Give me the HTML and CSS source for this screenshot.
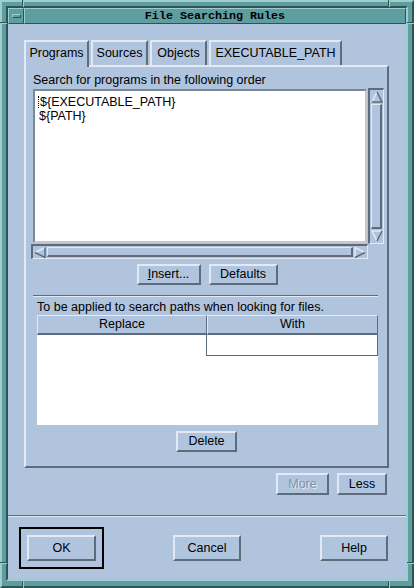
FILE: index.html
```html
<!DOCTYPE html>
<html>
<head>
<meta charset="utf-8">
<title>File Searching Rules</title>
<link rel="stylesheet" href="styles.css">
</head>
<body>
<div class="window">
  <span class="notch nv n-top-l"></span>
  <span class="notch nv n-top-r"></span>
  <span class="notch nv n-bot-l"></span>
  <span class="notch nv n-bot-r"></span>
  <span class="notch nh n-left-t"></span>
  <span class="notch nh n-left-b"></span>
  <span class="notch nh n-right-t"></span>
  <span class="notch nh n-right-b"></span>
  <div class="inner">
    <div class="titlebar">
      <div class="menu-btn"><span class="menu-glyph"></span></div>
      <div class="title">File Searching Rules</div>
    </div>
    <div class="content">
      <div class="upper">
        <div class="tabs">
          <div class="tab selected w-programs">Programs</div>
          <div class="tab w-sources">Sources</div>
          <div class="tab w-objects">Objects</div>
          <div class="tab w-exec">EXECUTABLE_PATH</div>
        </div>
        <div class="panel">
          <div class="label1">Search for programs in the following order</div>
          <div class="scrollwin">
            <div class="list">
              <div class="line"><span class="caret"></span>${EXECUTABLE_PATH}</div>
              <div class="line">${PATH}</div>
            </div>
            <div class="vscroll">
              <svg class="arrow-v" width="12" height="12" viewBox="0 0 12 12">
                <polygon points="6,1 11,11 1,11" fill="#b0c4de"/>
                <polyline points="1,11 6,1" fill="none" stroke="#e2e9f2" stroke-width="1.5"/>
                <polyline points="6,1 11,11 1,11" fill="none" stroke="#5d6b7c" stroke-width="1.5"/>
              </svg>
              <div class="vslider"></div>
              <svg class="arrow-v" width="12" height="12" viewBox="0 0 12 12">
                <polygon points="1,1 11,1 6,11" fill="#b0c4de"/>
                <polyline points="6,11 1,1 11,1" fill="none" stroke="#e2e9f2" stroke-width="1.5"/>
                <polyline points="11,1 6,11" fill="none" stroke="#5d6b7c" stroke-width="1.5"/>
              </svg>
            </div>
            <div class="hscroll">
              <svg class="arrow-h" width="12" height="11" viewBox="0 0 12 11">
                <polygon points="1,5.5 11,0.5 11,10.5" fill="#b0c4de"/>
                <polyline points="1,5.5 11,0.5" fill="none" stroke="#e2e9f2" stroke-width="1.5"/>
                <polyline points="11,0.5 11,10.5 1,5.5" fill="none" stroke="#5d6b7c" stroke-width="1.5"/>
              </svg>
              <div class="hslider"></div>
              <svg class="arrow-h" width="12" height="11" viewBox="0 0 12 11">
                <polygon points="1,0.5 11,5.5 1,10.5" fill="#b0c4de"/>
                <polyline points="1,10.5 1,0.5 11,5.5" fill="none" stroke="#e2e9f2" stroke-width="1.5"/>
                <polyline points="11,5.5 1,10.5" fill="none" stroke="#5d6b7c" stroke-width="1.5"/>
              </svg>
            </div>
            <div class="corner"></div>
          </div>
          <div class="btnrow">
            <div class="btn w-insert"><u>I</u>nsert...</div>
            <div class="btn w-defaults">Defaults</div>
          </div>
          <div class="sep"></div>
          <div class="label2">To be applied to search paths when looking for files.</div>
          <div class="table">
            <div class="thead">
              <div class="th">Replace</div>
              <div class="th">With</div>
            </div>
            <div class="trow">
              <div class="td"></div>
              <div class="td edit"></div>
            </div>
          </div>
          <div class="btn delete">Delete</div>
        </div>
        <div class="morerow">
          <div class="btn disabled w-more">More</div>
          <div class="btn w-less">Less</div>
        </div>
      </div>
      <div class="sep2"></div>
      <div class="bottomrow">
        <div class="default-frame"><div class="btn big">OK</div></div>
        <div class="btn big cancel">Cancel</div>
        <div class="btn big help">Help</div>
      </div>
    </div>
  </div>
</div>
</body>
</html>
```

FILE: styles.css
```css
* { box-sizing: border-box; }

html, body {
  margin: 0;
  padding: 0;
  background: #5f9ea0;
}

body {
  font-family: "Liberation Sans", Arial, sans-serif;
  font-size: 12.5px;
  color: #000;
}

.window {
  position: relative;
  width: 414px;
  height: 588px;
  background: #5f9ea0;
  border-style: solid;
  border-width: 2px;
  border-color: #9fcccd #2e5555 #2e5555 #9fcccd;
  padding: 4px 4px 5px 4px;
}

.notch { position: absolute; }
.nv { width: 1px; height: 7px; background: #2e5555; box-shadow: 1px 0 0 #9fcccd; }
.nh { width: 7px; height: 1px; background: #2e5555; box-shadow: 0 1px 0 #9fcccd; }
.n-top-l { left: 20px; top: -2px; }
.n-top-r { left: 386px; top: -2px; }
.n-bot-l { left: 20px; bottom: -2px; }
.n-bot-r { left: 386px; bottom: -2px; }
.n-left-t { left: -2px; top: 20px; }
.n-left-b { left: -2px; top: 560px; }
.n-right-t { right: -2px; top: 20px; }
.n-right-b { right: -2px; top: 560px; }

.inner {
  height: 100%;
  display: flex;
  flex-direction: column;
  border-style: solid;
  border-width: 2px;
  border-color: #2e5555 #9fcccd #9fcccd #2e5555;
}

.titlebar {
  display: flex;
  height: 16px;
  flex: none;
  background: #5f9ea0;
}

.menu-btn {
  width: 16px;
  height: 16px;
  border-style: solid;
  border-width: 1px;
  border-color: #9fcccd #2e5555 #2e5555 #9fcccd;
  display: flex;
  align-items: center;
  justify-content: center;
}

.menu-glyph {
  display: block;
  width: 9px;
  height: 4px;
  border-style: solid;
  border-width: 1px;
  border-color: #9fcccd #2e5555 #2e5555 #9fcccd;
}

.title {
  flex: 1;
  height: 16px;
  border-style: solid;
  border-width: 1px;
  border-color: #9fcccd #2e5555 #2e5555 #9fcccd;
  font-family: "Liberation Mono", "DejaVu Sans Mono", monospace;
  font-weight: bold;
  font-size: 11.7px;
  line-height: 14px;
  text-align: center;
  color: #000;
}

.content {
  flex: 1;
  background: #b0c4de;
  display: flex;
  flex-direction: column;
}

.upper {
  padding: 16px 17px 0 16px;
}

.tabs {
  display: flex;
  gap: 2px;
  height: 25px;
  align-items: flex-start;
}

.tab {
  height: 25px;
  border-style: solid;
  border-width: 2px 2px 0 2px;
  border-color: #e2e9f2 #5d6b7c #e2e9f2 #e2e9f2;
  background: #b0c4de;
  text-align: center;
  line-height: 23px;
  white-space: nowrap;
}

.tab.selected {
  height: 27px;
  position: relative;
  z-index: 1;
}

.w-programs { width: 65px; }
.w-sources { width: 57px; }
.w-objects { width: 57px; }
.w-exec { width: 133px; }

.panel {
  height: 403px;
  border-style: solid;
  border-width: 2px;
  border-color: #e2e9f2 #5d6b7c #5d6b7c #e2e9f2;
  display: flex;
  flex-direction: column;
}

.label1 {
  margin: 6px 0 0 7px;
  height: 14px;
  line-height: 14px;
  white-space: nowrap;
}

.scrollwin {
  margin: 1px 0 0 5px;
  display: grid;
  grid-template-columns: 337px 16px;
  grid-template-rows: 156px 15px;
}

.list {
  margin: 1px 1px 1px 2px;
  background: #fff;
  border-style: solid;
  border-width: 2px;
  border-color: #7d8896 #c8c8c8 #c8c8c8 #7d8896;
  padding: 4px 0 0 4px;
}

.line {
  height: 14px;
  line-height: 14px;
  white-space: nowrap;
}

.caret {
  display: inline-block;
  width: 0;
  height: 12px;
  vertical-align: -2px;
  border-left: 1px dotted #000;
  position: relative;
  left: -1px;
}

.vscroll {
  background: #b0c4de;
  border-style: solid;
  border-width: 2px 1px 1px 2px;
  border-color: #5d6b7c #e2e9f2 #e2e9f2 #5d6b7c;
  display: flex;
  flex-direction: column;
  align-items: center;
}

.arrow-v { flex: none; margin: 1px 0; display: block; }

.vslider {
  flex: 1;
  width: 11px;
  border-style: solid;
  border-width: 1px 2px 2px 1px;
  border-color: #e2e9f2 #5d6b7c #5d6b7c #e2e9f2;
}

.hscroll {
  background: #b0c4de;
  border-style: solid;
  border-width: 2px 1px 1px 2px;
  border-color: #5d6b7c #e2e9f2 #e2e9f2 #5d6b7c;
  display: flex;
  align-items: center;
}

.arrow-h { flex: none; margin: 0 1px; display: block; }

.hslider {
  flex: 1;
  height: 10px;
  border-style: solid;
  border-width: 1px 2px 2px 1px;
  border-color: #e2e9f2 #5d6b7c #5d6b7c #e2e9f2;
}

.corner { background: #b0c4de; }

.btn {
  height: 21px;
  border-style: solid;
  border-width: 2px;
  border-color: #e2e9f2 #5d6b7c #5d6b7c #e2e9f2;
  background: #b0c4de;
  text-align: center;
  line-height: 17px;
  white-space: nowrap;
}

.btn u { text-decoration: underline; text-underline-offset: 1px; }

.btnrow {
  margin-top: 5px;
  display: flex;
  justify-content: center;
  gap: 8px;
  padding-left: 1px;
}

.w-insert { width: 64px; }
.w-defaults { width: 69px; }

.sep {
  margin: 10px 9px 0 7px;
  border-top: 1px solid #5d6b7c;
  border-bottom: 1px solid #e2e9f2;
}

.label2 {
  margin: 3px 0 0 11px;
  height: 14px;
  line-height: 14px;
  white-space: nowrap;
}

.table {
  margin: 1px 0 0 11px;
  width: 341px;
  height: 110px;
  background: #fff;
}

.thead {
  display: grid;
  grid-template-columns: 170px 171px;
  height: 20px;
}

.th {
  background: #b0c4de;
  border-style: solid;
  border-width: 1px 1px 2px 1px;
  border-color: #e2e9f2 #5d6b7c #5d6b7c #e2e9f2;
  text-align: center;
  line-height: 16px;
}

.trow {
  display: grid;
  grid-template-columns: 170px 171px;
  height: 21px;
}

.td.edit {
  border-style: solid;
  border-width: 0 1px 1px 1px;
  border-color: #5d6b7c;
  margin-left: -1px;
}

.delete {
  margin: 6px auto 0;
  width: 61px;
}

.morerow {
  margin: 5px 2px 0 0;
  display: flex;
  justify-content: flex-end;
  gap: 8px;
}

.btn.w-more { width: 53px; height: 22px; line-height: 18px; }
.btn.w-less { width: 50px; height: 22px; line-height: 18px; }

.btn.disabled {
  color: #8293a8;
  text-shadow: 1px 1px 0 #e2e9f2;
}

.sep2 {
  margin-top: 20px;
  border-top: 1px solid #5d6b7c;
  border-bottom: 1px solid #e2e9f2;
}

.bottomrow {
  margin-top: 10px;
  display: flex;
  align-items: center;
  padding-left: 11px;
}

.default-frame {
  border: 2px solid #000;
  padding: 6px;
}

.btn.big {
  width: 69px;
  height: 26px;
  line-height: 22px;
}

.btn.cancel { width: 68px; margin-left: 69px; }
.btn.help { width: 68px; margin-left: 79px; }
```
